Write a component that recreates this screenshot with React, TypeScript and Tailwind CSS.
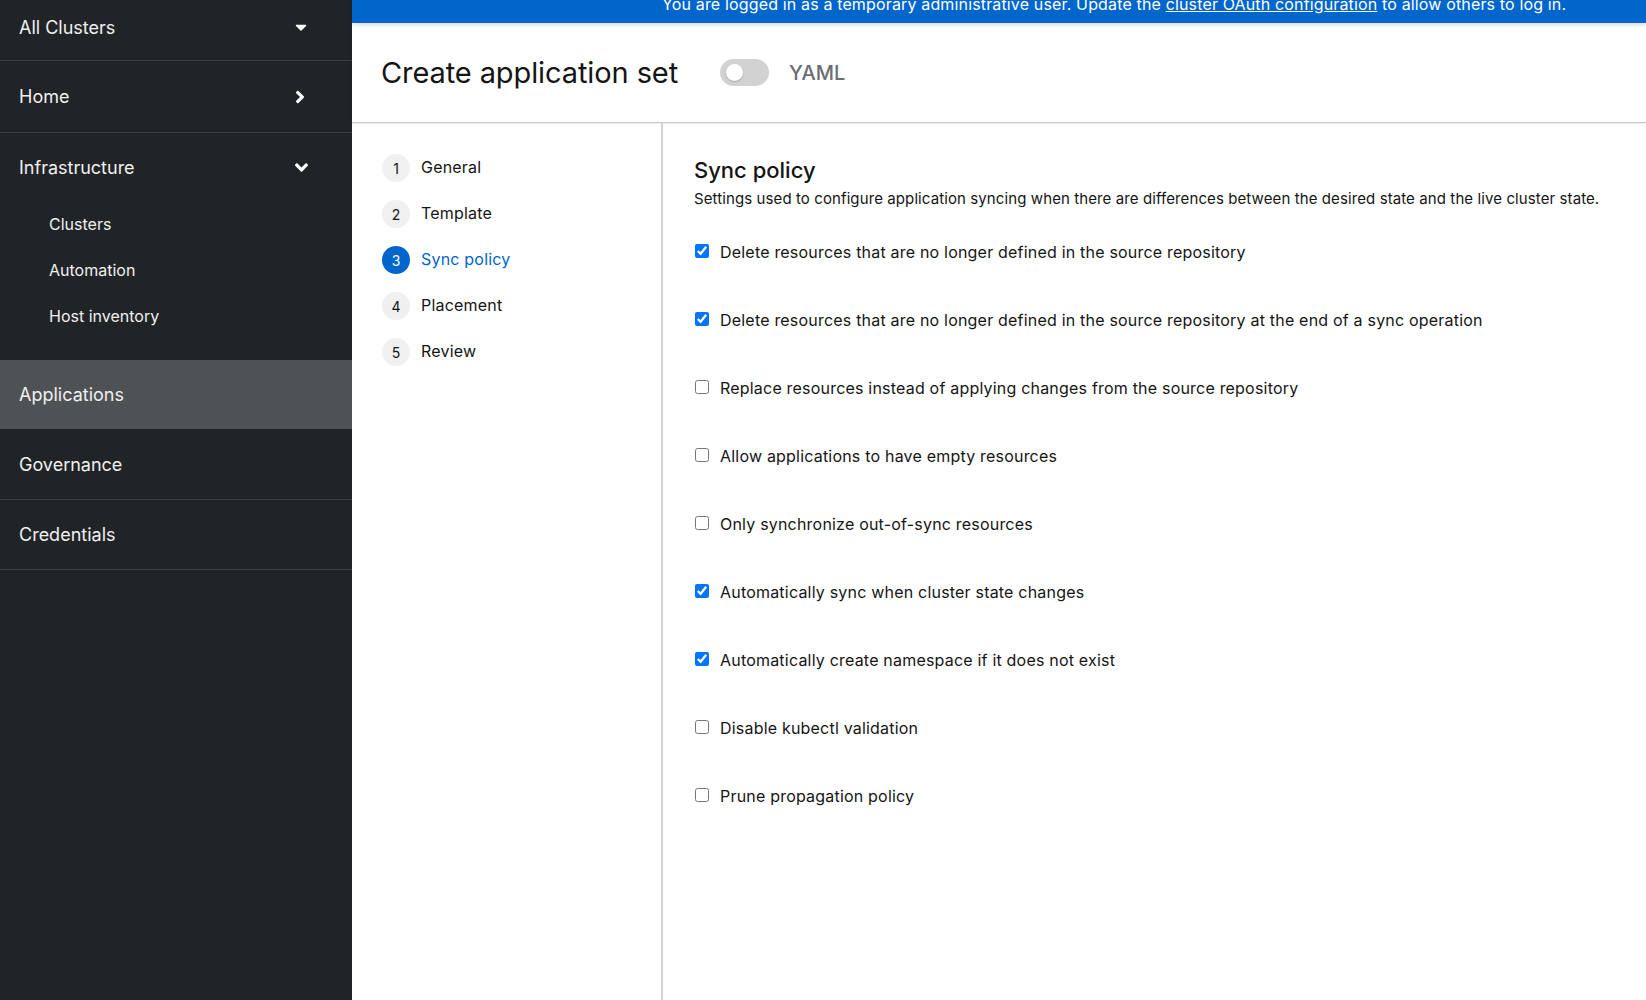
import React from "react";
import { FaCaretDown, FaAngleRight, FaAngleDown } from "react-icons/fa";

type Step = { n: number; label: string; active?: boolean };

const steps: Step[] = [
  { n: 1, label: "General" },
  { n: 2, label: "Template" },
  { n: 3, label: "Sync policy", active: true },
  { n: 4, label: "Placement" },
  { n: 5, label: "Review" },
];

const options: { label: string; checked: boolean }[] = [
  { label: "Delete resources that are no longer defined in the source repository", checked: true },
  {
    label:
      "Delete resources that are no longer defined in the source repository at the end of a sync operation",
    checked: true,
  },
  { label: "Replace resources instead of applying changes from the source repository", checked: false },
  { label: "Allow applications to have empty resources", checked: false },
  { label: "Only synchronize out-of-sync resources", checked: false },
  { label: "Automatically sync when cluster state changes", checked: true },
  { label: "Automatically create namespace if it does not exist", checked: true },
  { label: "Disable kubectl validation", checked: false },
  { label: "Prune propagation policy", checked: false },
];

const font = { fontFamily: "Inter, 'Liberation Sans', sans-serif" };

const Sidebar: React.FC = () => (
  <aside className="w-[352px] shrink-0 bg-[#212427] text-[#f0f0f0]">
    <div className="h-[61px] flex items-center justify-between pl-[19px] pr-[42px] pb-[6px] border-b border-[#3c3f42]">
      <span className="text-[18px]">All Clusters</span>
      <FaCaretDown className="w-[18px] h-[18px] text-white" />
    </div>
    <div className="h-[72px] flex items-center justify-between pl-[19px] pr-[42px] border-b border-[#3c3f42]">
      <span className="text-[18px]">Home</span>
      <FaAngleRight className="w-[20px] h-[20px] text-white" />
    </div>
    <div className="pb-[21px]">
      <div className="h-[68px] flex items-center justify-between pl-[19px] pr-[40px]">
        <span className="text-[18px]">Infrastructure</span>
        <FaAngleDown className="w-[21px] h-[21px] text-white" />
      </div>
      {["Clusters", "Automation", "Host inventory"].map((s) => (
        <div key={s} className="h-[46px] flex items-center pl-[49px] text-[16px]">
          {s}
        </div>
      ))}
    </div>
    <div className="h-[69px] flex items-center pl-[19px] bg-[#4f5255] text-[18px]">Applications</div>
    <div className="h-[71px] flex items-center pl-[19px] border-b border-[#3c3f42] text-[18px]">
      Governance
    </div>
    <div className="h-[70px] flex items-center pl-[19px] border-b border-[#3c3f42] text-[18px]">
      Credentials
    </div>
  </aside>
);

export default function App() {
  return (
    <div className="flex h-[1000px] w-full overflow-hidden bg-white" style={font}>
      <Sidebar />
      <main className="flex-1 flex flex-col min-w-0">
        <div className="relative z-10 h-[23px] shrink-0 overflow-hidden bg-[#0066cc] text-white shadow-[0_2px_4px_rgba(0,0,0,0.15)]">
          <div className="-mt-[8px] pl-[310px] text-[16px] leading-[24px] tracking-[0.15px] whitespace-nowrap">
            You are logged in as a temporary administrative user. Update the{" "}
            <span className="underline">cluster OAuth configuration</span> to allow others to log in.
          </div>
        </div>
        <header className="h-[100px] shrink-0 flex items-center pl-[29px] border-b border-[#c7c7c7] shadow-[0_1px_3px_rgba(0,0,0,0.08)]">
          <h1 className="text-[29px] text-[#151515] tracking-[-0.1px]">Create application set</h1>
          <div className="ml-[42px] flex items-center">
            <div className="relative w-[49px] h-[27px] rounded-full bg-[#d2d2d2]">
              <div className="absolute left-[6px] top-[5px] w-[17px] h-[17px] rounded-full bg-white shadow-[0_1px_2px_rgba(0,0,0,0.2)]" />
            </div>
            <span className="ml-[20px] text-[20px] font-medium text-[#6a6e73]">YAML</span>
          </div>
        </header>
        <div className="flex-1 flex min-h-0">
          <nav className="w-[311px] shrink-0 border-r-2 border-[#d2d2d2] pl-[30px] pt-[31px]">
            <ol className="flex flex-col gap-[18px]">
              {steps.map((s) => (
                <li key={s.n} className="flex items-center h-[28px]">
                  <span
                    className={
                      s.active
                        ? "w-[28px] h-[28px] rounded-full bg-[#0066cc] text-white text-[14px] flex items-center justify-center"
                        : "w-[28px] h-[28px] rounded-full bg-[#f0f0f0] text-[#151515] text-[14px] flex items-center justify-center"
                    }
                  >
                    {s.n}
                  </span>
                  <span
                    className={
                      s.active
                        ? "ml-[11px] text-[16px] tracking-[0.2px] text-[#0066cc] -mt-[3px]"
                        : "ml-[11px] text-[16px] tracking-[0.2px] text-[#151515] -mt-[3px]"
                    }
                  >
                    {s.label}
                  </span>
                </li>
              ))}
            </ol>
          </nav>
          <section className="flex-1 pl-[31px] pt-[32px] text-[#151515]">
            <h2 className="text-[22px] font-medium leading-[30px]">Sync policy</h2>
            <p className="text-[15px] tracking-[0.1px] leading-[20px] mt-[4px]">
              Settings used to configure application syncing when there are differences between the desired state
              and the live cluster state.
            </p>
            <div className="mt-[23px] flex flex-col">
              {options.map((o) => (
                <label key={o.label} className="h-[68px] flex items-start pt-[8px]">
                  <input
                    type="checkbox"
                    checked={o.checked}
                    readOnly
                    className="w-[14px] h-[14px] mt-[4px] ml-[1px] shrink-0"
                  />
                  <span className="ml-[11px] text-[16px] tracking-[0.2px] leading-[24px]">{o.label}</span>
                </label>
              ))}
            </div>
          </section>
        </div>
      </main>
    </div>
  );
}
